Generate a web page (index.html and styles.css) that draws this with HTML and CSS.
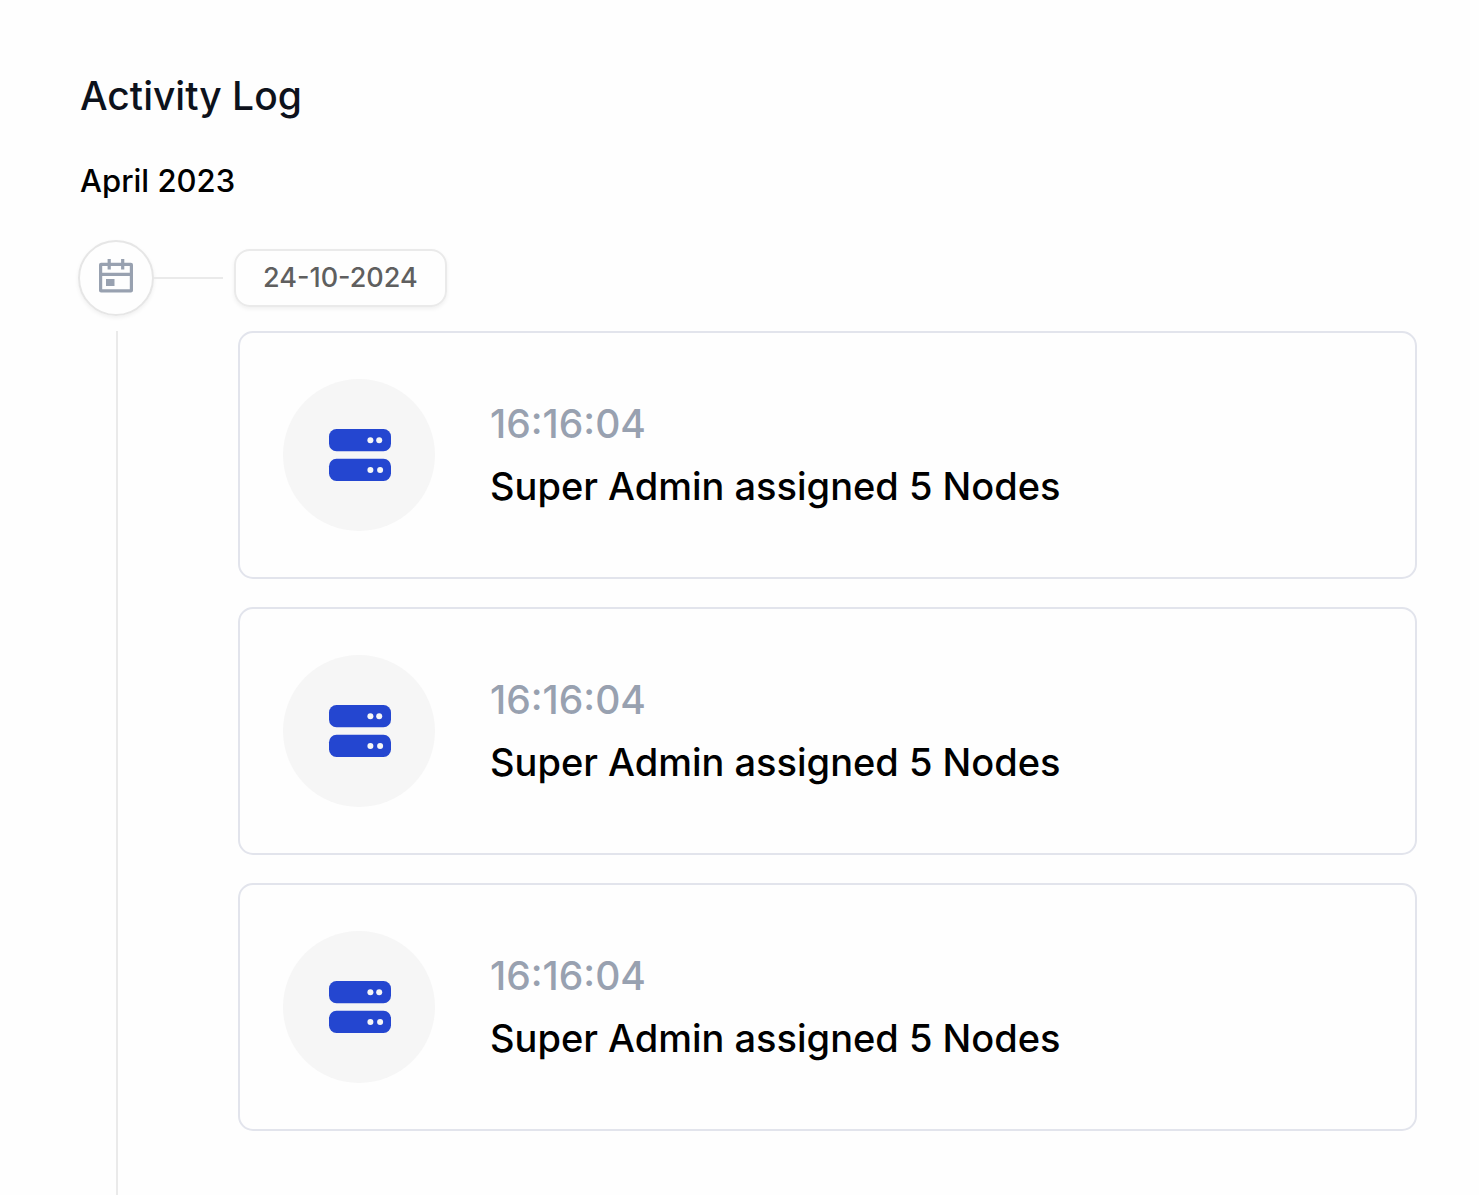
FILE: index.html
```html
<!DOCTYPE html>
<html lang="en">
<head>
    <meta charset="UTF-8">
    <meta name="viewport" content="width=device-width, initial-scale=1.0">
    <title>Activity Log</title>
    <link rel="stylesheet" href="styles.css">
</head>
<body>
    <!-- shared server icon -->
    <svg class="iconDefs" aria-hidden="true">
        <symbol id="serverIcon" viewBox="0 0 64 52">
            <rect x="2" width="62" height="22.3" rx="7.5"/>
            <rect x="2" y="29.7" width="62" height="22.3" rx="7.5"/>
            <g fill="#f6f6f6">
                <circle cx="43.4" cy="11.2" r="3"/>
                <circle cx="52.2" cy="11.2" r="3"/>
                <circle cx="43.4" cy="41" r="3"/>
                <circle cx="53.1" cy="41" r="3"/>
            </g>
        </symbol>
    </svg>

    <main>
        <header>
            <h1>Activity Log</h1>
            <h2>April 2023</h2>
        </header>

        <section class="timeline">
            <div class="dateRow">
                <div class="dateIcon">
                    <svg width="34" height="34" viewBox="0 0 34 34" aria-hidden="true">
                        <g fill="none" stroke="#98a1b0" stroke-width="3.2">
                            <rect x="1.6" y="5.3" width="30.8" height="26.6" rx="0.5"/>
                            <path d="M1 15.3H33M10.2 0V10.5M23.7 0V10.5"/>
                        </g>
                        <rect x="7" y="20" width="8.5" height="7" fill="#98a1b0"/>
                    </svg>
                </div>
                <div class="connector"></div>
                <time class="dateLabel" datetime="2024-10-24">24-10-2024</time>
            </div>

            <div class="dayEvents">
                <div class="rail"></div>
                <ul class="eventList">
                    <li class="event">
                        <div class="eventIcon"><svg width="64" height="52" aria-hidden="true"><use href="#serverIcon"/></svg></div>
                        <div class="eventText">
                            <time>16:16:04</time>
                            <p>Super Admin assigned 5 Nodes</p>
                        </div>
                    </li>
                    <li class="event">
                        <div class="eventIcon"><svg width="64" height="52" aria-hidden="true"><use href="#serverIcon"/></svg></div>
                        <div class="eventText">
                            <time>16:16:04</time>
                            <p>Super Admin assigned 5 Nodes</p>
                        </div>
                    </li>
                    <li class="event">
                        <div class="eventIcon"><svg width="64" height="52" aria-hidden="true"><use href="#serverIcon"/></svg></div>
                        <div class="eventText">
                            <time>16:16:04</time>
                            <p>Super Admin assigned 5 Nodes</p>
                        </div>
                    </li>
                </ul>
            </div>
        </section>
    </main>
</body>
</html>
```

FILE: styles.css
```css
* {
    box-sizing: border-box;
}

body {
    margin: 0;
    background-color: #fefefe;
    color: #000;
    font-family: Inter, "Liberation Sans", sans-serif;
}

h1, h2, p, ul {
    margin: 0;
    padding: 0;
    font-weight: 500;
}

.iconDefs {
    display: none;
}

main {
    display: flex;
    flex-direction: column;
    min-height: 100vh;
    padding: 72px 62px 0 78px;
}

header {
    padding-left: 2px;
}

h1 {
    color: #0d121c;
    font-size: 39px;
    line-height: 48px;
}

h2 {
    margin-top: 42px;
    font-size: 31px;
    line-height: 38px;
}

.timeline {
    display: flex;
    flex-direction: column;
    flex: 1;
    margin-top: 40px;
}

.dateRow {
    display: flex;
    align-items: center;
}

.dateIcon {
    display: flex;
    align-items: center;
    justify-content: center;
    width: 76px;
    height: 76px;
    padding-bottom: 4px;
    border: 2px solid #e6e6e6;
    border-radius: 50%;
    box-shadow: 0 2px 4px rgba(0, 0, 0, 0.06);
}

.connector {
    width: 69px;
    height: 2px;
    background-color: #eaeaea;
}

.dateLabel {
    margin-left: 11px;
    padding: 0 27px;
    border: 2px solid #eaeaea;
    border-radius: 16px;
    box-shadow: 0 2px 4px rgba(0, 0, 0, 0.06);
    color: #5f5f5f;
    font-size: 27px;
    font-weight: 500;
    line-height: 54px;
}

.dayEvents {
    display: flex;
    flex: 1;
    margin-top: 15px;
}

.rail {
    width: 2px;
    margin-left: 38px;
    background-color: #eaeaea;
}

.eventList {
    display: flex;
    flex: 1;
    flex-direction: column;
    gap: 28px;
    margin-left: 120px;
    padding-bottom: 62px;
    list-style: none;
}

.event {
    display: flex;
    align-items: center;
    gap: 55px;
    height: 248px;
    padding: 0 43px;
    border: 2px solid #e2e4ec;
    border-radius: 15px;
}

.eventIcon {
    display: flex;
    flex-shrink: 0;
    align-items: center;
    justify-content: center;
    width: 152px;
    height: 152px;
    border-radius: 50%;
    background-color: #f6f6f6;
    fill: #2446d0;
}

.eventText {
    font-size: 38px;
    font-weight: 500;
    line-height: 62px;
}

.eventText time {
    display: block;
    color: #98a1b0;
    font-size: 39px;
}
```
